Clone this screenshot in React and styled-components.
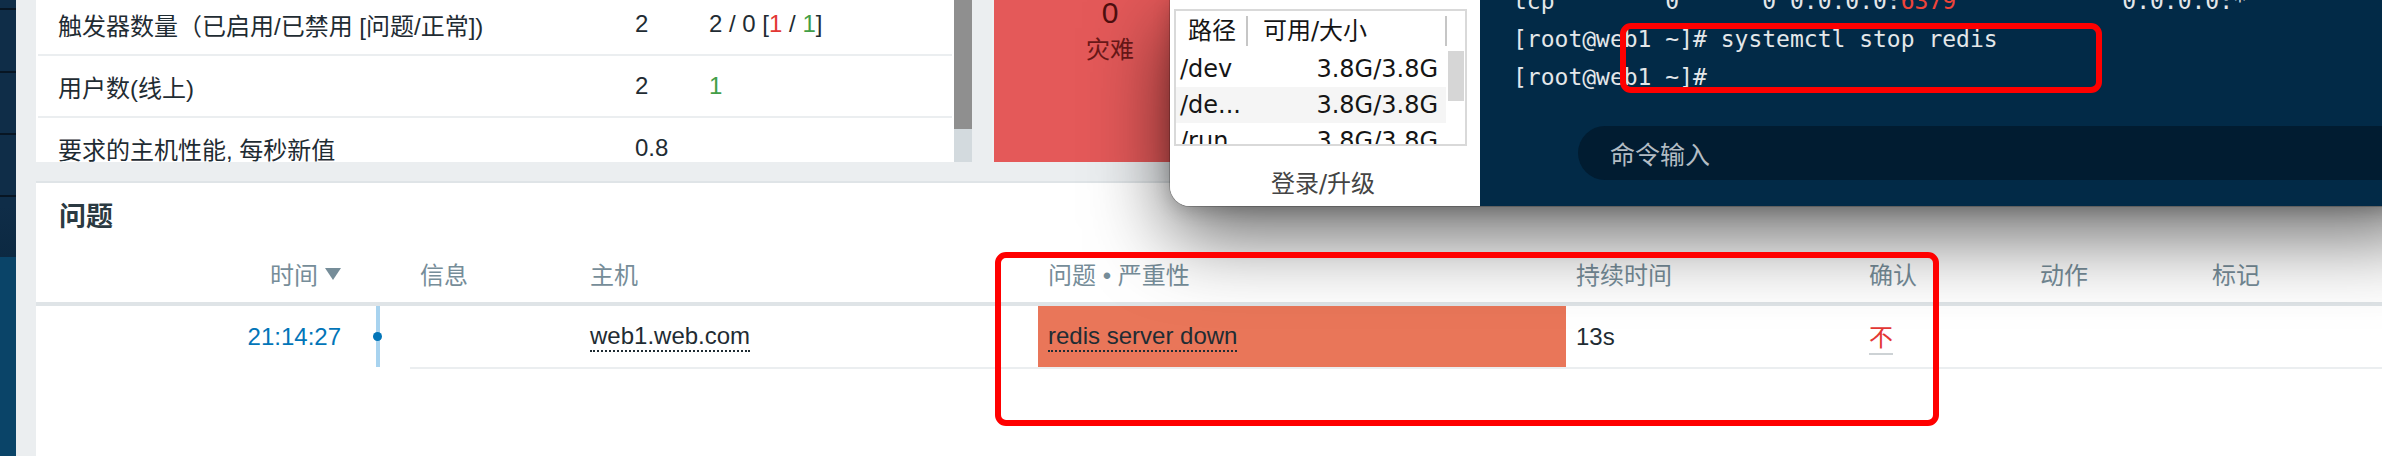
import React from 'react';
import styled, { createGlobalStyle } from 'styled-components';

const GlobalStyle = createGlobalStyle`
  html, body {
    margin: 0;
    padding: 0;
  }
  body {
    width: 2382px;
    height: 456px;
    overflow: hidden;
    background: #ebeef0;
    font-family: "Liberation Sans", Arial, "Noto Sans CJK SC", sans-serif;
    color: #1f2c33;
  }
`;

const Page = styled.div`
  position: relative;
  display: flex;
  width: 2382px;
  height: 456px;
  overflow: hidden;
`;

const Sidebar = styled.aside`
  width: 16px;
  flex: none;
  display: flex;
  flex-direction: column;
  background: #0a4468;
`;

const SideMenu = styled.div`
  height: 257px;
  flex: none;
  display: flex;
  flex-direction: column;
  background: linear-gradient(#0f2d48 80%, #0c2942);
`;

const SideItem = styled.div`
  height: ${p => p.$h}px;
  flex: none;
  border-bottom: 2px solid #071523;
`;

const Main = styled.main`
  flex: 1;
  display: flex;
  flex-direction: column;
  gap: 19px;
  padding-left: 20px;
  min-width: 0;
`;

const TopRow = styled.div`
  height: 162px;
  flex: none;
  display: flex;
  gap: 20px;
`;

const InfoWidget = styled.section`
  width: 936px;
  flex: none;
  display: flex;
  background: #fff;
  overflow: hidden;
`;

const InfoBody = styled.div`
  flex: 1;
  overflow: hidden;
`;

// the list is scrolled a few pixels down
const InfoList = styled.div`
  margin-top: -6px;
`;

const InfoRow = styled.div`
  display: grid;
  grid-template-columns: 577px 74px 1fr;
  align-items: center;
  height: 60px;
  margin: 0 2px;
  padding-left: 20px;
  border-bottom: 2px solid #ebeef0;
  font-size: 24px;
  white-space: nowrap;
`;

const Tone = styled.span`
  color: ${p => (p.$tone === 'red' ? '#e33734' : '#429e47')};
`;

const ScrollTrack = styled.div`
  width: 18px;
  flex: none;
  background: #d3dade;
`;

const ScrollThumb = styled.div`
  height: 129px;
  background: #8f8f8f;
`;

const SeverityTile = styled.section`
  width: 232px;
  flex: none;
  background: #e45959;
  text-align: center;
  border-left: 2px solid #eef0f2;
`;

const TileCount = styled.div`
  font-size: 30px;
  line-height: 28px;
  margin-top: -1px;
  color: #4e0f0f;
`;

const TileLabel = styled.div`
  font-size: 24px;
  line-height: 30px;
  margin-top: 8px;
  color: #6a1818;
`;

const ProblemsWidget = styled.section`
  flex: 1;
  background: #fff;
  border-top: 2px solid #dfe4e7;
`;

const WidgetTitle = styled.h2`
  margin: 0;
  height: 62px;
  display: flex;
  align-items: center;
  padding-left: 23px;
  font-size: 27px;
  font-weight: 700;
  color: #2b3a42;
`;

const columns = '315px 59px 170px 458px 528px 293px 171px 172px 1fr';

const HeadRow = styled.div`
  display: grid;
  grid-template-columns: ${columns};
  height: 57px;
  border-bottom: 4px solid #dfe4e7;
`;

const HeadCell = styled.div`
  display: flex;
  align-items: center;
  justify-content: ${p => (p.$right ? 'flex-end' : 'flex-start')};
  padding: 0 10px;
  font-size: 24px;
  color: #768d99;
  white-space: nowrap;
`;

const SortArrow = styled.span`
  width: 0;
  height: 0;
  margin-left: 7px;
  border-left: 8px solid transparent;
  border-right: 8px solid transparent;
  border-top: 12px solid #768d99;
`;

const DataRow = styled.div`
  display: grid;
  grid-template-columns: ${columns};
  height: 63px;
`;

const Cell = styled.div`
  display: flex;
  align-items: center;
  justify-content: ${p => (p.$right ? 'flex-end' : 'flex-start')};
  padding: 0 10px;
  font-size: 24px;
  white-space: nowrap;
  background: ${p => p.$bg || 'transparent'};
  background-clip: content-box;
  border-bottom: 2px solid ${p => (p.$plain ? 'transparent' : '#ebeef0')};
  ${p => p.$bg && 'padding: 0; > * { margin-left: 10px; }'}
`;

const TimeLink = styled.span`
  color: #0275b8;
`;

const Timeline = styled.div`
  display: flex;
  justify-content: center;
  padding-right: 6px;
`;

const TimelineBar = styled.div`
  width: 4px;
  height: 61px;
  background: #a8d3ef;
  display: flex;
  align-items: center;
  justify-content: center;
`;

const TimelineDot = styled.span`
  width: 9px;
  height: 9px;
  flex: none;
  border-radius: 50%;
  background: #0275b8;
`;

const Dotted = styled.span`
  color: #1f2c33;
  border-bottom: 2px dotted #1f2c33;
`;

const AckLink = styled.span`
  color: #e33734;
  border-bottom: 2px solid #cdd2d5;
`;

const AppWindow = styled.div`
  position: absolute;
  left: 1170px;
  top: 0;
  width: 1260px;
  height: 206px;
  display: flex;
  border-bottom-left-radius: 20px;
  overflow: hidden;
  z-index: 2;
  box-shadow: 0 28px 80px 0 rgba(0, 0, 0, 0.62), 0 4px 18px rgba(0, 0, 0, 0.18),
    0 0 0 1px rgba(0, 0, 0, 0.2);
`;

const SidePanel = styled.div`
  width: 310px;
  flex: none;
  display: flex;
  flex-direction: column;
  box-sizing: border-box;
  padding: 9px 0 0 4px;
  background: #fff;
  font-family: "DejaVu Sans", "Noto Sans CJK SC", sans-serif;
  color: #151515;
`;

const DiskBox = styled.div`
  width: 293px;
  height: 137px;
  flex: none;
  box-sizing: border-box;
  border: 2px solid #d9d9d9;
  display: flex;
  flex-direction: column;
  overflow: hidden;
`;

const DiskHead = styled.div`
  height: 40px;
  flex: none;
  display: flex;
  align-items: center;
  font-size: 24px;
`;

const DiskHeadCell = styled.div`
  width: ${p => p.$w}px;
  box-sizing: border-box;
  padding-left: ${p => p.$pad}px;
  height: 30px;
  line-height: 30px;
  border-right: 2px solid #c6c6c6;
  white-space: nowrap;
`;

const DiskBody = styled.div`
  flex: 1;
  display: flex;
  min-height: 0;
`;

const DiskList = styled.div`
  width: 270px;
  flex: none;
`;

const DiskRow = styled.div`
  height: 36px;
  display: flex;
  align-items: center;
  justify-content: space-between;
  padding: 0 8px 0 4px;
  font-size: 24px;
  background: ${p => (p.$alt ? '#f5f5f5' : 'transparent')};
`;

const DiskScroll = styled.div`
  width: 16px;
  margin-left: 2px;
  flex: none;
`;

const DiskThumb = styled.div`
  height: 50px;
  background: #d6d6d6;
`;

const LoginFooter = styled.div`
  flex: 1;
  display: flex;
  align-items: center;
  justify-content: center;
  padding: 10px 8px 0 0;
  font-size: 24px;
  color: #444;
`;

const Terminal = styled.div`
  flex: 1;
  display: flex;
  flex-direction: column;
  padding-left: 33px;
  background: #022a47;
  min-width: 0;
`;

// first line is scrolled partly out of view
const TermLines = styled.pre`
  margin: -18px 0 0;
  font-family: "DejaVu Sans Mono", "Liberation Mono", monospace;
  font-size: 23px;
  line-height: 38px;
  color: #e4e7ea;
`;

const TermRed = styled.span`
  color: #f0443a;
`;

const CommandInput = styled.div`
  margin: 30px 0 0 65px;
  height: 54px;
  display: flex;
  align-items: center;
  padding-left: 32px;
  border-radius: 27px 0 0 27px;
  background: #011c31;
  font-family: "Noto Sans CJK SC", sans-serif;
  font-size: 25px;
  color: #b3bcc4;
`;

const Highlight = styled.div`
  position: absolute;
  left: ${p => p.$left}px;
  top: ${p => p.$top}px;
  width: ${p => p.$w}px;
  height: ${p => p.$h}px;
  box-sizing: border-box;
  border: 6px solid #ff0000;
  border-radius: 11px;
  z-index: 3;
`;

const infoRows = [
  {
    label: '触发器数量（已启用/已禁用 [问题/正常])',
    value: '2',
    extra: (
      <>
        2 / 0 [<Tone $tone="red">1</Tone> / <Tone $tone="green">1</Tone>]
      </>
    ),
  },
  { label: '用户数(线上)', value: '2', extra: <Tone $tone="green">1</Tone> },
  { label: '要求的主机性能, 每秒新值', value: '0.8', extra: null },
];

const disks = [
  { path: '/dev', size: '3.8G/3.8G' },
  { path: '/de...', size: '3.8G/3.8G', alt: true },
  { path: '/run', size: '3.8G/3.8G' },
];

export default function App() {
  return (
    <>
      <GlobalStyle />
      <Page>
        <Sidebar>
          <SideMenu>
            <SideItem $h={8} />
            <SideItem $h={61} />
            <SideItem $h={60} />
            <SideItem $h={60} />
          </SideMenu>
        </Sidebar>

        <Main>
          <TopRow>
            <InfoWidget>
              <InfoBody>
                <InfoList>
                  {infoRows.map(row => (
                    <InfoRow key={row.label}>
                      <span>{row.label}</span>
                      <span>{row.value}</span>
                      <span>{row.extra}</span>
                    </InfoRow>
                  ))}
                </InfoList>
              </InfoBody>
              <ScrollTrack>
                <ScrollThumb />
              </ScrollTrack>
            </InfoWidget>
            <SeverityTile>
              <TileCount>0</TileCount>
              <TileLabel>灾难</TileLabel>
            </SeverityTile>
          </TopRow>

          <ProblemsWidget>
            <WidgetTitle>问题</WidgetTitle>
            <HeadRow>
              <HeadCell $right>
                时间<SortArrow />
              </HeadCell>
              <HeadCell />
              <HeadCell>信息</HeadCell>
              <HeadCell>主机</HeadCell>
              <HeadCell>问题 • 严重性</HeadCell>
              <HeadCell>持续时间</HeadCell>
              <HeadCell>确认</HeadCell>
              <HeadCell>动作</HeadCell>
              <HeadCell>标记</HeadCell>
            </HeadRow>
            <DataRow>
              <Cell $right $plain>
                <TimeLink>21:14:27</TimeLink>
              </Cell>
              <Timeline>
                <TimelineBar>
                  <TimelineDot />
                </TimelineBar>
              </Timeline>
              <Cell />
              <Cell>
                <Dotted>web1.web.com</Dotted>
              </Cell>
              <Cell $bg="#e97659">
                <Dotted>redis server down</Dotted>
              </Cell>
              <Cell>13s</Cell>
              <Cell>
                <AckLink>不</AckLink>
              </Cell>
              <Cell />
              <Cell />
            </DataRow>
          </ProblemsWidget>
        </Main>

        <AppWindow>
          <SidePanel>
            <DiskBox>
              <DiskHead>
                <DiskHeadCell $w={72} $pad={12}>路径</DiskHeadCell>
                <DiskHeadCell $w={199} $pad={15}>可用/大小</DiskHeadCell>
              </DiskHead>
              <DiskBody>
                <DiskList>
                  {disks.map(d => (
                    <DiskRow key={d.path} $alt={d.alt}>
                      <span>{d.path}</span>
                      <span>{d.size}</span>
                    </DiskRow>
                  ))}
                </DiskList>
                <DiskScroll>
                  <DiskThumb />
                </DiskScroll>
              </DiskBody>
            </DiskBox>
            <LoginFooter>登录/升级</LoginFooter>
          </SidePanel>
          <Terminal>
            <TermLines>
              {'tcp        0      0 0.0.0.0:'}
              <TermRed>6379</TermRed>
              {'            0.0.0.0:*\n'}
              {'[root@web1 ~]# systemctl stop redis\n'}
              {'[root@web1 ~]#'}
            </TermLines>
            <CommandInput>命令输入</CommandInput>
          </Terminal>
        </AppWindow>

        <Highlight $left={1620} $top={23} $w={482} $h={70} />
        <Highlight $left={995} $top={252} $w={944} $h={174} />
      </Page>
    </>
  );
}
